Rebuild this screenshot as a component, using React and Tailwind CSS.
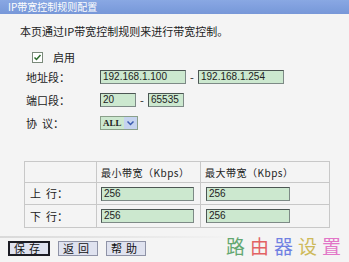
const font = { fontFamily: '"SimSun", "Noto Sans CJK SC", sans-serif' };

const Field = ({ value, className }) => (
  <div
    className={`h-[14px] border border-[#7d8a86] border-t-[#4c5653] border-l-[#4c5653] bg-[#cce8cf] pl-[2px] text-[10px] leading-[12px] text-[#222] ${className}`}
    style={{ fontFamily: '"Liberation Sans", sans-serif' }}
  >
    {value}
  </div>
);

const Btn = ({ label, dark }) => (
  <button
    className={`h-[15px] px-[4px] text-[11px] leading-[11px] tracking-[4px] text-[#111] bg-[#dfe2ef] border ${
      dark ? "border-[2px] border-[#1c1c24]" : "border-[#8f93a7]"
    }`}
  >
    {label}
  </button>
);

const App = () => {
  return (
    <div className="w-[349px] h-[262px] bg-[#f4f4f4] overflow-hidden relative text-[#222]" style={font}>
      {/* title bar */}
      <div className="h-[14px] bg-gradient-to-b from-[#7ea0e2] to-[#6a8ed6] text-white text-[10px] leading-[14px] pl-[8px] opacity-90">
        IP带宽控制规则配置
      </div>

      <div className="pl-[20px] pt-[10px] text-[11px] leading-[14px]">本页通过IP带宽控制规则来进行带宽控制。</div>

      {/* enable */}
      <div className="flex items-center pl-[32px] mt-[12px] h-[14px] gap-[10px] text-[11px]">
        <div className="w-[11px] h-[11px] border border-[#7a8a7a] bg-white flex items-center justify-center">
          <svg width="9" height="9" viewBox="0 0 9 9">
            <path d="M1.5 4.5 L3.5 6.5 L7.5 2" stroke="#2c6b2c" strokeWidth="1.5" fill="none" />
          </svg>
        </div>
        <span>启用</span>
      </div>

      {/* address */}
      <div className="flex items-center mt-[6px] h-[14px] text-[11px]">
        <span className="w-[100px] pl-[26px]">地址段：</span>
        <Field value="192.168.1.100" className="w-[86px]" />
        <span className="w-[12px] text-center">-</span>
        <Field value="192.168.1.254" className="w-[86px]" />
      </div>

      {/* port */}
      <div className="flex items-center mt-[9px] h-[14px] text-[11px]">
        <span className="w-[100px] pl-[26px]">端口段：</span>
        <Field value="20" className="w-[36px]" />
        <span className="w-[12px] text-center">-</span>
        <Field value="65535" className="w-[36px]" />
      </div>

      {/* protocol */}
      <div className="flex items-center mt-[9px] h-[14px] text-[11px]">
        <span className="w-[100px] pl-[26px] whitespace-pre">协  议：</span>
        <div className="flex h-[14px] border border-[#8aa08a]">
          <div className="w-[23px] bg-[#cce8cf] text-[9px] leading-[12px] pl-[2px] font-bold" style={{ fontFamily: '"Liberation Serif", serif' }}>
            ALL
          </div>
          <div className="w-[13px] bg-[#c5d3ef] flex items-center justify-center">
            <svg width="7" height="5" viewBox="0 0 7 5">
              <path d="M0.5 0.5 L3.5 3.5 L6.5 0.5" stroke="#3a5bb0" strokeWidth="1.5" fill="none" />
            </svg>
          </div>
        </div>
      </div>

      {/* table */}
      <div className="ml-[24px] mt-[31px] w-[306px] border border-[#c8c8c8] text-[10px]">
        <div className="flex h-[21px] border-b border-[#c8c8c8]">
          <div className="w-[72px] border-r border-[#c8c8c8]" />
          <div className="w-[104px] border-r border-[#c8c8c8] flex items-center pl-[4px] tracking-[0.5px]">最小带宽（Kbps）</div>
          <div className="flex-1 flex items-center pl-[4px] tracking-[0.5px]">最大带宽（Kbps）</div>
        </div>
        {["上  行：", "下  行："].map((label, i) => (
          <div key={label} className={`flex h-[22px] ${i === 0 ? "border-b border-[#c8c8c8]" : ""}`}>
            <div className="w-[72px] border-r border-[#c8c8c8] flex items-center pl-[5px] text-[11px] whitespace-pre">{label}</div>
            <div className="w-[104px] border-r border-[#c8c8c8] flex items-center pl-[4px]">
              <Field value="256" className="w-[93px]" />
            </div>
            <div className="flex-1 flex items-center pl-[5px]">
              <Field value="256" className="w-[84px]" />
            </div>
          </div>
        ))}
      </div>

      {/* footer */}
      <div className="mt-[8px] h-[2px] w-[240px] bg-gradient-to-r from-[#d9d9d9] to-[#f4f4f4]" />
      <div className="flex items-center gap-[8px] pl-[8px] mt-[3px]">
        <Btn label="保存" dark />
        <Btn label="返回" />
        <Btn label="帮助" />
      </div>

      {/* watermark */}
      <div className="absolute left-[226px] top-[234px] flex gap-[5px] text-[19px] leading-[24px] opacity-85" style={{ fontFamily: '"Noto Sans CJK SC", sans-serif' }}>
        <span className="text-[#4a9a5a]">路</span>
        <span className="text-[#e0484a]">由</span>
        <span className="text-[#5a6ee0]">器</span>
        <span className="text-[#c8b040]">设</span>
        <span className="text-[#e060c0]">置</span>
      </div>
    </div>
  );
};

export default App;
